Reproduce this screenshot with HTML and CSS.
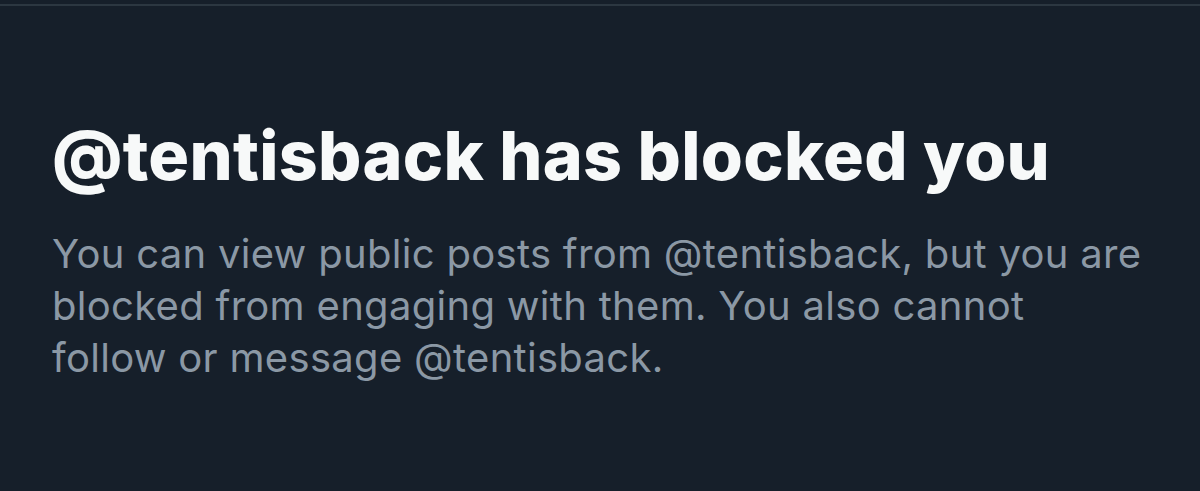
FILE: index.html
```html
<!DOCTYPE html>
<html lang="en">
<head>
<meta charset="utf-8">
<title>Blocked</title>
<link rel="stylesheet" href="styles.css">
</head>
<body>
<div class="page">
  <div class="divider"></div>
  <section class="notice">
    <h1 class="notice-title">@tentisback has blocked you</h1>
    <p class="notice-text">You can view public posts from @tentisback, but you are blocked from engaging with them. You also cannot follow or message @tentisback.</p>
  </section>
</div>
</body>
</html>
```
FILE: styles.css
```css
html, body {
  margin: 0;
  padding: 0;
  background: #161f2a;
}
.page {
  width: 1200px;
  height: 491px;
  overflow: hidden;
  background: #161f2a;
  padding-top: 4px;
  box-sizing: border-box;
}
.divider {
  height: 2px;
  background: #2c3741;
}
.notice {
  padding: 0 0 0 52px;
  margin-top: 111px;
}
.notice-title {
  margin: 0;
  font-family: Inter, "Noto Sans", sans-serif;
  font-weight: 800;
  font-size: 68px;
  line-height: 76px;
  color: #f7f9f9;
  letter-spacing: 0.3px;
  white-space: nowrap;
}
.notice-text {
  margin: 35px 0 0 0;
  font-family: Inter, "Noto Sans", sans-serif;
  font-weight: 400;
  font-size: 40px;
  line-height: 52px;
  color: #8b98a5;
  letter-spacing: 0.3px;
  width: 1095px;
}
```
